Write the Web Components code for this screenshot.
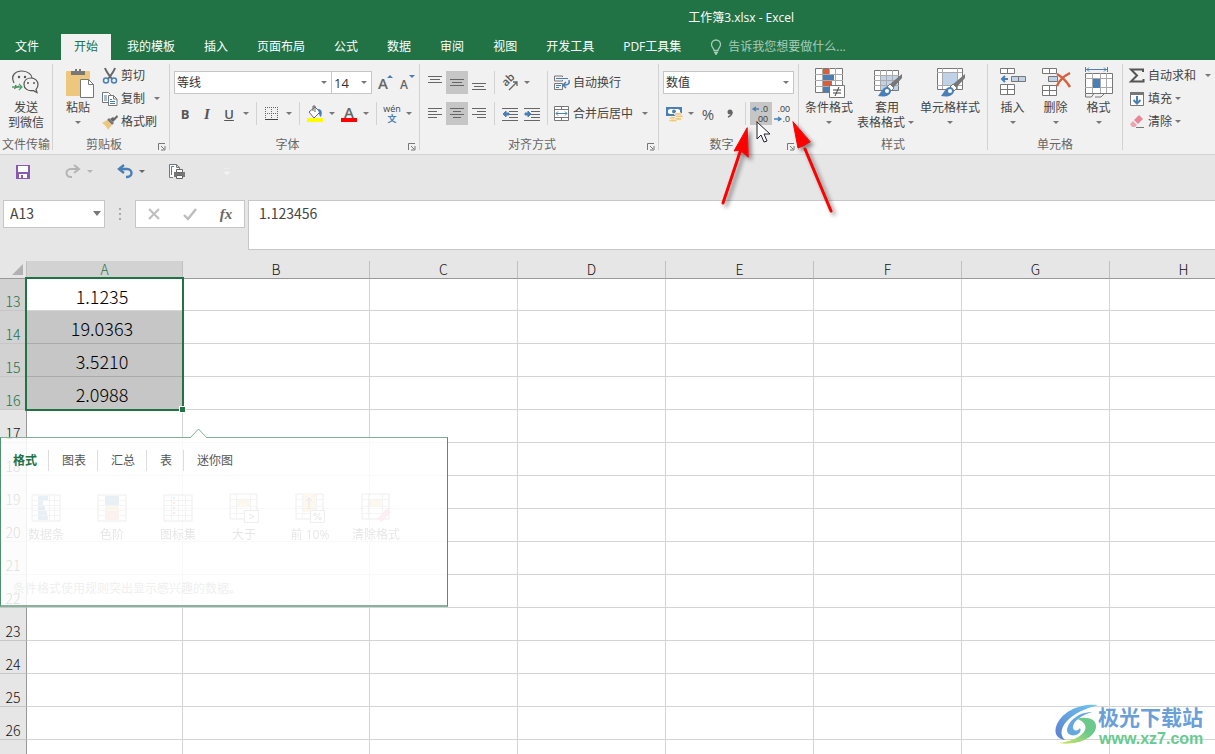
<!DOCTYPE html>
<html lang="zh-CN">
<head>
<meta charset="utf-8">
<meta name="viewport" content="width=device-width, initial-scale=1">
<title>工作簿3.xlsx - Excel</title>
<style>
html, body { margin: 0; height: 100%; }
body {
  --green: #217346; --ink: #444; --line: #d4d4d4; --blue: #4a7fb5;
  font: 12px/16px "Open Sans", "Noto Sans CJK SC", sans-serif;
  color: var(--ink); background: #e6e6e6; overflow: hidden;
}
</style>
</head>
<body>
<xl-window>
  <xl-title slot="top">工作簿3.xlsx - Excel</xl-title>
  <xl-tabs slot="top"></xl-tabs>
  <xl-ribbon slot="top">
    <xl-group caption="文件传输">
      <xl-big icon="wechat" size="52" line1="发送" line2="到微信"></xl-big>
    </xl-group>
    <xl-group caption="剪贴板" size="117" launcher>
      <xl-row class="flush">
        <xl-big icon="paste" size="44" line1="粘贴" menu></xl-big>
        <xl-stack>
          <xl-cmd icon="cut">剪切</xl-cmd>
          <xl-cmd icon="copy" menu="far">复制</xl-cmd>
          <xl-cmd icon="brush">格式刷</xl-cmd>
        </xl-stack>
      </xl-row>
    </xl-group>
    <xl-group caption="字体" size="250" launcher>
      <xl-stack class="spaced">
        <xl-row>
          <xl-combo label="字体" value="等线" size="158"></xl-combo>
          <xl-combo label="字号" value="14" size="40" joined></xl-combo>
          <xl-tool icon="grow" label="增大字号"></xl-tool>
          <xl-tool icon="shrink" label="减小字号"></xl-tool>
        </xl-row>
        <xl-row>
          <xl-tool label="加粗"><b>B</b></xl-tool>
          <xl-tool label="倾斜"><i>I</i></xl-tool>
          <xl-tool label="下划线" menu><u>U</u></xl-tool>
          <xl-sep></xl-sep>
          <xl-tool icon="borders" label="边框" menu></xl-tool>
          <xl-sep></xl-sep>
          <xl-tool icon="fill" label="填充颜色" menu></xl-tool>
          <xl-tool icon="fontcolor" label="字体颜色" menu></xl-tool>
          <xl-sep></xl-sep>
          <xl-tool icon="pinyin" label="拼音" menu></xl-tool>
        </xl-row>
      </xl-stack>
    </xl-group>
    <xl-group caption="对齐方式" size="239" launcher>
      <xl-row class="top">
        <xl-stack class="spaced">
          <xl-row><xl-tool icon="vtop" label="顶端对齐"></xl-tool><xl-tool icon="vmid" label="垂直居中" on></xl-tool><xl-tool icon="vbot" label="底端对齐"></xl-tool><xl-sep></xl-sep><xl-tool icon="orient" label="方向" menu></xl-tool></xl-row>
          <xl-row><xl-tool icon="left" label="左对齐"></xl-tool><xl-tool icon="center" label="居中" on></xl-tool><xl-tool icon="right" label="右对齐"></xl-tool><xl-sep></xl-sep><xl-tool icon="outdent" label="减少缩进量"></xl-tool><xl-tool icon="indent" label="增加缩进量"></xl-tool></xl-row>
        </xl-stack>
        <xl-sep class="tall"></xl-sep>
        <xl-stack class="spaced">
          <xl-cmd icon="wrap">自动换行</xl-cmd>
          <xl-cmd icon="merge" menu="far">合并后居中</xl-cmd>
        </xl-stack>
      </xl-row>
    </xl-group>
    <xl-group caption="数字" size="140" launcher>
      <xl-stack class="spaced">
        <xl-row><xl-combo label="数字格式" value="数值" size="131"></xl-combo></xl-row>
        <xl-row>
          <xl-tool icon="money" label="会计数字格式" menu></xl-tool>
          <xl-tool label="百分比样式"><span class="pct">%</span></xl-tool>
          <xl-tool icon="comma" label="千位分隔样式"></xl-tool>
          <xl-sep></xl-sep>
          <xl-tool icon="moredec" label="增加小数位数" on></xl-tool>
          <xl-tool icon="lessdec" label="减少小数位数"></xl-tool>
        </xl-row>
      </xl-stack>
    </xl-group>
    <xl-group caption="样式" size="189">
      <xl-row class="flush">
        <xl-big icon="cond" size="54" line1="条件格式" menu></xl-big>
        <xl-big icon="tablestyle" size="62" line1="套用" line2="表格格式" menu></xl-big>
        <xl-big icon="cellstyle" size="64" line1="单元格样式" menu></xl-big>
      </xl-row>
    </xl-group>
    <xl-group caption="单元格" size="135">
      <xl-row class="flush">
        <xl-big icon="insert" size="43" line1="插入" menu></xl-big>
        <xl-big icon="delete" size="43" line1="删除" menu></xl-big>
        <xl-big icon="format" size="43" line1="格式" menu></xl-big>
      </xl-row>
    </xl-group>
    <xl-group size="110">
      <xl-stack class="flush">
        <xl-cmd icon="sum" menu="far">自动求和</xl-cmd>
        <xl-cmd icon="down" menu="near">填充</xl-cmd>
        <xl-cmd icon="eraser" menu="near">清除</xl-cmd>
      </xl-stack>
    </xl-group>
  </xl-ribbon>
  <xl-quickbar slot="top"></xl-quickbar>
  <xl-formula slot="top" cell="A13" value="1.123456"></xl-formula>
  <xl-sheet>
    <xl-analysis></xl-analysis>
  </xl-sheet>
  <xl-mark slot="over"></xl-mark>
  <xl-pointers slot="over"></xl-pointers>
</xl-window>

<script>
const crisp = 'shape-rendering="crispEdges"';
const lines = (list) => `<g ${crisp} fill="#666">` + list.map(([x, y, w]) => `<rect x="${x}" y="${y}" width="${w}" height="1"/>`).join('') + '</g>';
const dentLines = lines([[0,2,16],[7,5,9],[7,8,9],[7,11,9],[0,14,16]]);
const paintBrush = `<path d="M31 8v4L22 22l-4-3z" fill="#777"/><path d="M19 18l4 4-3 3-4-4z" fill="#fff" stroke="#777"/><path d="M16 21c-4 0-5 4-9 9 5 1 12 1 13-5 0-2-2-4-4-4z" fill="#4a7fb5"/><circle cx="16" cy="25" r="2" fill="#fff"/>`;
const digits = (y, t) => `<text x="17" y="${y}" font-family="Liberation Sans" font-size="9" text-anchor="end" fill="#444">${t}</text>`;

/* name: [width, height, markup] */
const ICONS = {
  wechat: [32, 32, `<g fill="none" stroke="#555" stroke-width="1.2"><path d="M4 17C0 9 6 5 12 5s10 4 10 7M6 19l-1 3 4-2"/><path d="M21 12c4 0 7 3 7 6.500c0 2-1 4-2 5l1 3-4-2c-5 1-9-2-9-6s3-6.500 7-6.500z"/></g><g fill="#555"><circle cx="9" cy="11" r="1.200"/><circle cx="15" cy="11" r="1.200"/><circle cx="18" cy="17" r="1"/><circle cx="24" cy="17" r="1"/></g><path d="M2 21h10M9 18l3 3-3 3" fill="none" stroke="#4fa36c" stroke-width="1.300"/>`],
  paste: [32, 32, `<rect x="4" y="5" width="24" height="25" rx="1" fill="#eec77f"/><path d="M9 9V5h4V3h6v2h4v4z" fill="#777"/><rect x="15" y="3" width="2" height="2" fill="#eee"/><path d="M18.500 13.500h8l5 5v13h-13z" fill="#fff" stroke="#777"/><path d="M26.500 13.500v5h5" fill="none" stroke="#777"/>`],
  cut: [16, 16, `<path d="M3 0c1 3 3 6 7 11M13 0c-1 3-3 6-7 11" stroke="#666" stroke-width="2" fill="none"/><circle cx="4" cy="12.500" r="2.500" fill="none" stroke="#4a7fb5" stroke-width="1.500"/><circle cx="12" cy="12.500" r="2.500" fill="none" stroke="#4a7fb5" stroke-width="1.500"/>`],
  copy: [16, 16, `<path d="M.5 1.500h6l2 2v8h-8z" fill="#fff" stroke="#777"/><path d="M2 5h3M2 7h3M2 9h3" stroke="#4a7fb5"/><path d="M6.500 4.500h5l3.500 3.500v6.500H6.500z" fill="#fff" stroke="#777"/><path d="M11.500 4.500V8H15" fill="none" stroke="#777"/><path d="M8 8.500h2M8 10.500h5M8 12.500h5" stroke="#4a7fb5"/>`],
  brush: [16, 16, `<path d="M15 1l1 2-5 5-3-3 3-2 1 1z" fill="#666"/><path d="M7 4l5 5-2 2-5-5z" fill="#777"/><path d="M5 6l5 5-4 5c-1-3-3-5-6-7z" fill="#eec77f"/>`],
  grow: [20, 18, `<text x="2" y="15" font-size="15" font-weight="600" fill="#666">A</text><path d="M11 4l3-3 3 3z" fill="#4a7fb5"/>`],
  shrink: [20, 18, `<text x="2" y="15" font-size="12" font-weight="600" fill="#666">A</text><path d="M11 1l3 3 3-3z" fill="#4a7fb5"/>`],
  borders: [14, 14, `<path d="M.5 0v12M6.500 0v12M12.500 0v12M0 .5h13M0 6.500h13" stroke="#666" stroke-dasharray="1 1"/><rect y="12" width="13" height="1" fill="#444"/>`],
  fill: [18, 18, `<path d="M3 7l6-5 5 5-6 6z" fill="#fff" stroke="#666"/><path d="M7 6V1h2v6" fill="none" stroke="#666"/><path d="M12 4c3 0 5 2 3 8-2-1-2-4-3-8z" fill="#4a7fb5"/><rect x="1" y="13" width="16" height="4" fill="#ff0"/>`],
  fontcolor: [18, 18, `<text x="4" y="13" font-size="15" font-weight="600" fill="#666">A</text><rect x="1" y="13" width="16" height="4" fill="red"/>`],
  pinyin: [20, 20, `<text x="10" y="8" font-size="9" text-anchor="middle" fill="#444">wén</text><text x="10" y="18" font-size="9" font-weight="700" text-anchor="middle" fill="#4a7fb5">文</text>`],
  vtop: [16, 16, lines([[1,1,14],[3,4,10],[1,7,14]])],
  vmid: [16, 16, lines([[1,4,14],[3,7,10],[1,10,14]])],
  vbot: [16, 16, lines([[1,8,14],[3,11,10],[1,14,14]])],
  left: [16, 16, lines([[1,2,14],[1,5,9],[1,8,14],[1,11,9]])],
  center: [16, 16, lines([[1,2,14],[4,5,8],[1,8,14],[4,11,8]])],
  right: [16, 16, lines([[1,2,14],[6,5,9],[1,8,14],[6,11,9]])],
  outdent: [16, 16, dentLines + `<path d="M1 8l3-3v2h3v2H4v2z" fill="#4a7fb5" stroke="#4a7fb5"/>`],
  indent: [16, 16, dentLines + `<path d="M7 8L4 5v2H1v2h3v2z" fill="#4a7fb5" stroke="#4a7fb5"/>`],
  orient: [18, 18, `<text x="0" y="0" font-size="11" font-weight="600" fill="#555" transform="translate(5 13) rotate(-45)">ab</text><path d="M8 16l8-8M12 8h4v4" fill="none" stroke="#666" stroke-width="1.300"/>`],
  wrap: [16, 16, `<path d="M.5 1h8M.5 6h8M.5 1v5M.5 8.500h8v6h-8zM8.500 1v1M8.500 5v1" fill="none" stroke="#777"/><path d="M2 3.500h12M2 10.500h5M2 12.500h3" stroke="#4a7fb5"/><path d="M15 5c1 4-1 5-5 5M12 7l-3 3 3 3" fill="none" stroke="#4a7fb5" stroke-width="1.500"/>`],
  merge: [16, 16, `<path d="M.5.500h14v14H.5zM.5 3.500h14M.5 11.500h14M7.500.500v3M7.500 11.500v3" fill="#fff" stroke="#777"/><path d="M2 7.500h11M4 5.500l-2 2 2 2M11 5.500l2 2-2 2" fill="none" stroke="#4a7fb5"/>`],
  money: [18, 18, `<rect x="1" y="2" width="16" height="9" fill="#4a7fb5"/><path d="M3 5l2-1h8l2 1v3l-2 1H5L3 8z" fill="#fff"/><circle cx="9" cy="6.500" r="2" fill="#4a7fb5"/><g fill="#eec77f" stroke="#fff" stroke-width=".6"><ellipse cx="13" cy="9" rx="4" ry="1.500"/><ellipse cx="14" cy="11.500" rx="4" ry="1.500"/><ellipse cx="8" cy="13" rx="4" ry="1.500"/><ellipse cx="13" cy="14" rx="4" ry="1.500"/><ellipse cx="8" cy="15.500" rx="4" ry="1.500"/></g>`],
  comma: [14, 16, `<circle cx="7" cy="6" r="2.500" fill="#666"/><path d="M9 6c0 3-1 4-4 5" stroke="#666" stroke-width="1.500" fill="none"/>`],
  moredec: [20, 18, `${digits(7, '.0')}${digits(17, '.00')}<path d="M8 4H2M5 2L2 4l3 2" fill="none" stroke="#4a7fb5" stroke-width="1.300"/>`],
  lessdec: [20, 18, `${digits(7, '.00')}${digits(17, '.0')}<path d="M1 14h7M5 12l3 2-3 2" fill="none" stroke="#4a7fb5" stroke-width="1.300"/>`],
  cond: [32, 32, `<path d="M2.500 2.500h27v24h-27z" fill="#fff" stroke="#777"/><path d="M2 8.500h28M2 14.500h28M2 20.500h28M9.500 2v24M16.500 2v24M22.500 2v24" stroke="#aaa"/><g ${crisp}><path d="M10 3h6v5h-6zM10 15h9v5h-9z" fill="#d65f3c"/><path d="M10 9h11v5H10zM10 21h6v5h-6z" fill="#4a7fb5"/></g><path d="M16.500 19.500h15v12h-15z" fill="#fff" stroke="#777"/><path d="M20 24h8M20 27h8M26 21l-4 9" stroke="#444"/>`],
  tablestyle: [32, 32, `<path d="M3.500 4.500h24v20h-24z" fill="#fff" stroke="#777"/><path d="M10 10h17v14H10z" fill="#c0d2e8"/><path d="M3 9.500h25M3 14.500h25M3 19.500h25M9.500 4v20M15.500 4v20M21.500 4v20" stroke="#aaa"/>${paintBrush}`],
  cellstyle: [32, 32, `<path d="M3.500 2.500h25v21h-25z" fill="#fff" stroke="#777"/><path d="M3 6.500h25M3 19.500h25M8.500 2v21M23.500 2v21" stroke="#aaa"/><path d="M9 7h14v12H9z" fill="#c0d2e8"/>${paintBrush}`],
  insert: [32, 32, `<path d="M3.500 2.500h14v5h-14zM10.500 2.500v5M3.500 18.500h14v10h-14zM10.500 18.500v10M3.500 23.500h14" fill="#fff" stroke="#777"/><path d="M14.500 10.500h14v5h-14zM21.500 10.500v5" fill="#c0d2e8" stroke="#777"/><path d="M11 13H5M8 10l-3 3 3 3" fill="none" stroke="#4a7fb5" stroke-width="2"/>`],
  delete: [32, 32, `<path d="M2.500 2.500h14v5h-14zM9.500 2.500v5M2.500 19.500h14v10h-14zM9.500 19.500v10M2.500 24.500h14" fill="#fff" stroke="#777"/><path d="M8.500 10.500h9v5h-9z" fill="#c0d2e8" stroke="#777"/><path d="M17 8c5 3 10 8 13 13M30 7c-6 3-11 8-13 13" stroke="#d65f3c" stroke-width="2.500" fill="none"/>`],
  format: [32, 32, `<path d="M2.500 1v5M24.500 1v5M3 3.500h21M6 1.500l-2 2 2 2M21 1.500l2 2-2 2" stroke="#4a7fb5" fill="none"/><path d="M2.500 7.500h27v20h-27z" fill="#fff" stroke="#777"/><path d="M2 12.500h27M2 21.500h27M9.500 7v20M17.500 7v20M23.500 7v20" stroke="#aaa"/><path d="M10 13h7v9h-7z" fill="#4a7fb5"/><path d="M2.500 28v3h6l2-3M12 31h6l3-3" stroke="#777" fill="none"/>`],
  sum: [16, 16, `<path d="M14 4V1.500H2l6 6-6 6h12.500V11" fill="none" stroke="#555" stroke-width="2"/>`],
  down: [16, 16, `<path d="M1.500 1.500h13v13h-13z" fill="#fff" stroke="#777"/><path d="M1 1h14v3H1z" fill="#777"/><path d="M8 5v8M4.500 9L8 12.500 11.500 9" fill="none" stroke="#4a7fb5" stroke-width="2"/>`],
  eraser: [16, 16, `<path d="M10 1l4 4-5 5-4-4z" fill="#e8869a"/><path d="M4 7l4 4-2 2H3l-2-3z" fill="#e8a5b2"/><path d="M7 13.500h8" stroke="#777"/>`],
  launch: [8, 8, `<path d="M.5 7V.5H7M3 3l3 3M7 3v4H3" fill="none" stroke="#777"/>`],
  bulb: [12, 16, `<path d="M4 11.500C4 9 1.500 8.500 1.500 5.500a4.500 4.500 0 0 1 9 0C10.500 8.500 8 9 8 11.500zM4 13.500h4M5 15h2" fill="none" stroke="#a9cbb8" stroke-width="1.300"/>`],
  save: [16, 16, `<path d="M1 1h14v14H1z" fill="#8a5ab0"/><path d="M3 2h10v6H3zM4 10h8v4H4z" fill="#fff"/><path d="M6 11h2v3H6z" fill="#8a5ab0"/>`],
  redo: [18, 16, `<path d="M14 5H7c-6 0-6 8 0 8h1M10 1l5 4-5 4" fill="none" stroke="#b4b4b4" stroke-width="2"/>`],
  undo: [18, 16, `<path d="M4 5h7c6 0 6 8 0 8h-1M8 1L3 5l5 4" fill="none" stroke="#4a7fb5" stroke-width="2.400"/>`],
  print: [18, 18, `<path d="M5 14.500H1.500V1.500h7l3 3V6M8.500 1.500v3h3" fill="#fff" stroke="#777"/><path d="M3.500 12V3.500H6" stroke="#4a7fb5" fill="none"/><path d="M6 9h11v5H6z" fill="#777"/><path d="M8.500 6.500h6v3h-6zM8.500 12.500h6v3h-6z" fill="#fff" stroke="#666"/>`],
  custom: [8, 8, `<path d="M1 .5h6M1 4l3 3 3-3z" fill="#f3f3f3" stroke="#f3f3f3" stroke-width=".5"/>`],
  cancel: [14, 14, `<path d="M2 2l10 10M12 2L2 12" stroke="#bdbdbd" stroke-width="2"/>`],
  accept: [14, 14, `<path d="M1 8l4 4 8-10" fill="none" stroke="#bdbdbd" stroke-width="2.400"/>`],
  bars: [28, 28, `<path d="M0 1h28v26H0z" fill="#fff" stroke="#777"/><path d="M0 6.500h28M0 11.500h28M0 16.500h28M0 21.500h28M17.500 1v26M22.500 1v26" stroke="#aaa"/><path d="M6 2h10v4H6zM6 7h5v4H6zM6 12h7v4H6zM6 17h9v4H6zM6 22h10v4H6z" fill="#4a7fb5"/>`],
  scale: [28, 28, `<path d="M0 1h28v26H0z" fill="#fff" stroke="#777"/><path d="M0 6.500h28M0 11.500h28M0 16.500h28M0 21.500h28" stroke="#aaa"/><path d="M7 2h14v9H7z" fill="#4a7fb5"/><path d="M7 12h14v5H7z" fill="#eec77f"/><path d="M7 17h14v9H7z" fill="#e59a80"/>`],
  iconset: [28, 28, `<path d="M0 1h28v26H0z" fill="#fff" stroke="#777"/><path d="M0 6.500h28M0 11.500h28M0 16.500h28M0 21.500h28M7.500 1v26M14.500 1v26M21.500 1v26" stroke="#aaa"/><path d="M9 8h2v2H9zM9 18h2v2H9z" fill="#d65f3c"/><path d="M9 13h2v2H9zM9 3h2v2H9z" fill="#4a7fb5"/>`],
  greater: [30, 30, `<path d="M1 1h27v25H1z" fill="#fff" stroke="#777"/><path d="M1 6.500h27M1 13.500h27M1 20.500h27M7.500 1v25M21.500 1v25" stroke="#aaa"/><path d="M8 7h13v7H8z" fill="#eec77f"/><path d="M15.500 17.500h14v12h-14z" fill="#fff" stroke="#777"/><path d="M20 21l5 2.500-5 2.500" fill="none" stroke="#444"/>`],
  topten: [30, 30, `<path d="M1 1h27v25H1z" fill="#fff" stroke="#777"/><path d="M1 6.500h27M1 13.500h27M1 20.500h27M7.500 1v25M21.500 1v25" stroke="#aaa"/><path d="M8 1h13v18H8z" fill="#eec77f"/><path d="M14 16V5M11 8l3-3 3 3" fill="none" stroke="#444"/><path d="M15.500 17.500h14v12h-14z" fill="#fff" stroke="#777"/><path d="M20 27l5-7" stroke="#444"/><circle cx="20" cy="21.500" r="1.200" fill="none" stroke="#444"/><circle cx="25" cy="25.500" r="1.200" fill="none" stroke="#444"/>`],
  clearfmt: [30, 30, `<path d="M1 1h27v25H1z" fill="#fff" stroke="#777"/><path d="M1 6.500h27M1 13.500h27M1 20.500h27M7.500 1v25M21.500 1v25" stroke="#aaa"/><path d="M8 7h13v7H8z" fill="#eec77f"/><path d="M26 15l4 4-9 10-5-3z" fill="#e8869a"/>`]
};
const svg = (name) => {
  const [w, h, body] = ICONS[name];
  return `<svg class="icon" width="${w}" height="${h}" viewBox="0 0 ${w} ${h}" aria-hidden="true">${body}</svg>`;
};
const CARET = '<svg class="caret" width="12" height="6" viewBox="0 0 12 6" aria-hidden="true"><path d="M3 1h6L6 4z" fill="currentColor"/></svg>';
const BASE = `:host,*{box-sizing:border-box}svg{display:block;flex:none;overflow:visible}
button{font:inherit;color:inherit;background:none;border:0;margin:0;padding:0;text-align:center;white-space:nowrap}`;

function define(tag, css, render) {
  customElements.define(tag, class extends HTMLElement {
    constructor() { super(); this.attachShadow({ mode: 'open' }); }
    connectedCallback() {
      const size = this.getAttribute('size');
      if (size) this.style.setProperty('--size', size + 'px');
      this.shadowRoot.innerHTML = `<style>${BASE}${css}</style>${render(this)}`;
    }
  });
}
const attr = (el, name) => el.getAttribute(name) || '';

define('xl-window', `:host{display:flex;flex-direction:column;height:100vh;position:relative;overflow:hidden}`,
  () => `<slot name="top"></slot><slot></slot><slot name="over"></slot>`);

define('xl-title', `:host{display:block;flex:none;background:var(--green);color:#fff}
h1{margin:0;padding:10px 0 8px 22%;font:inherit;text-align:center}`,
  () => `<h1><slot></slot></h1>`);

define('xl-tabs', `:host{display:flex;flex:none;gap:3px;height:26px;padding-left:2px;background:var(--green);color:#fff}
button{padding:0 13px}
button:first-of-type{margin-right:6px}
button[aria-selected=true]{background:#f1f1f1;color:var(--green)}
label{display:flex;align-items:center;gap:6px;margin-left:13px}
input{width:140px;padding:0;border:0;background:none;font:inherit;color:#a9cbb8}
input::placeholder{color:#a9cbb8;opacity:1}`,
  () => ['文件', '开始', '我的模板', '插入', '页面布局', '公式', '数据', '审阅', '视图', '开发工具', 'PDF工具集']
    .map((t) => `<button role="tab" aria-selected="${t === '开始'}">${t}</button>`).join('') +
    `<label>${svg('bulb')}<input aria-label="搜索" placeholder="告诉我您想要做什么..."></label>`);

define('xl-ribbon', `:host{display:flex;flex:none;height:95px;background:#f1f1f1;border-bottom:1px solid #d2d2d2}`, () => `<slot></slot>`);

define('xl-group', `:host{display:flex;flex-direction:column;flex:none;width:var(--size,53px);padding-top:4px;background:linear-gradient(#d2d2d2,#d2d2d2) right center/1px 86px no-repeat}
:host(:last-child){background:none}
.body{height:72px}
.foot{display:flex;height:16px;color:#666;padding-right:1px}
.foot span{flex:1;padding-top:1px;text-align:center;white-space:nowrap}
.foot button{display:flex;width:14px;padding:7px 3px 0}`,
  (el) => `<div class="body"><slot></slot></div><div class="foot"><span>${attr(el, 'caption')}</span>${el.hasAttribute('launcher') ? `<button aria-label="${attr(el, 'caption')}设置">${svg('launch')}</button>` : ''}</div>`);

define('xl-row', `:host{display:flex;align-items:center}:host(.top){align-items:flex-start}:host(.flush){align-items:flex-start;padding-left:3px}`, () => `<slot></slot>`);
define('xl-stack', `:host{display:flex;flex-direction:column}:host(.spaced){gap:8px;padding:7px 0 0 4px}:host(.flush){padding-left:4px}`, () => `<slot></slot>`);
define('xl-sep', `:host{display:block;flex:none;width:1px;height:23px;margin:0 4px;background:#d2d2d2}:host(.tall){height:54px;margin:7px 0 0 4px}`, () => '');

define('xl-big', `:host{display:block;width:var(--size)}
button{display:flex;flex-direction:column;align-items:center;width:100%;padding-top:2px;line-height:15px}
.icon{margin-bottom:2px}
.second{display:flex;align-items:center;height:15px}.caret{color:#777}`,
  (el) => `<button>${svg(attr(el, 'icon'))}<span>${attr(el, 'line1')}</span><span class="second">${attr(el, 'line2')}${el.hasAttribute('menu') ? CARET : ''}</span></button>`);

define('xl-cmd', `:host{display:block}
button{display:flex;align-items:center;gap:3px;height:23px;padding:0 2px}
.caret{color:#777;margin-left:-3px}.far{margin-left:3px}`,
  (el) => `<button>${svg(attr(el, 'icon'))}<slot></slot>${attr(el, 'menu') ? CARET.replace('"caret"', `"caret ${attr(el, 'menu')}"`) : ''}</button>`);

define('xl-tool', `:host{display:flex;flex:none}
button{display:flex;align-items:center;justify-content:center;width:22px;height:23px;font-size:13px;color:#555}
button.menu{width:12px;color:#777}
:host([on]) button{background:#c6c6c6}
::slotted(i){font-family:"Liberation Serif",serif;font-weight:700;font-size:15px}
::slotted(u){font-weight:600}
::slotted(.pct){font-size:15px}`,
  (el) => `<button aria-label="${attr(el, 'label')}">${attr(el, 'icon') ? svg(attr(el, 'icon')) : '<slot></slot>'}</button>${el.hasAttribute('menu') ? `<button class="menu" aria-label="${attr(el, 'label')}选项">${CARET}</button>` : ''}`);

define('xl-combo', `:host{display:grid;flex:none;width:var(--size);height:23px}
:host([joined]){margin:0 3px 0 -1px;width:41px}
select,svg{grid-area:1/1}
select{appearance:none;width:100%;height:100%;padding:0 2px;border:1px solid #c6c6c6;border-radius:0;background:#fff;font:inherit;color:#333}
:host([joined]) select{font-size:13px}
.caret{justify-self:end;align-self:center;margin-right:2px;color:#777;pointer-events:none}`,
  (el) => `<select aria-label="${attr(el, 'label')}"><option>${attr(el, 'value')}</option></select>${CARET}`);

define('xl-quickbar', `:host{display:flex;flex:none;align-items:center;height:35px;padding:0 0 2px 12px}
button{display:flex;align-items:center;justify-content:center;width:22px;height:22px}
.menu{width:12px;color:#666}.off{color:#b4b4b4}
.a{margin-left:28px}.b{margin-left:18px}.c{margin-left:33px}`,
  () => `<button aria-label="保存">${svg('save')}</button>
<button class="a" aria-label="恢复">${svg('redo')}</button><button class="menu off" aria-label="恢复选项">${CARET}</button>
<button class="b" aria-label="撤消">${svg('undo')}</button><button class="menu" aria-label="撤消选项">${CARET}</button>
<button class="b" aria-label="打印预览">${svg('print')}</button><button class="c menu" aria-label="自定义快速访问工具栏">${svg('custom')}</button>`);

define('xl-formula', `:host{display:flex;flex:none;align-items:flex-start;padding:10px 0 11px 3px;font:14px/20px "Noto Sans CJK SC",sans-serif}
.name{display:grid;width:102px;height:28px}
.name>*{grid-area:1/1}
input,textarea{font:inherit;color:#444;border:1px solid #c6c6c6;border-radius:0;background:#fff;margin:0}
.name input{width:100%;padding:0 6px 2px}
.name svg{justify-self:end;align-self:center;margin-right:2px;color:#777}
.name path{d:path("M2 0h8L6 5z")}
.dots{width:2px;height:12px;margin:8px 14px;background:repeating-linear-gradient(#aaa 0 2px,transparent 2px 5px)}
.keys{display:flex;width:110px;height:28px;border:1px solid #c6c6c6;background:#fff}
.keys button{display:flex;flex:1;align-items:center;justify-content:center}
.fx{font:italic bold 15px "Liberation Serif",serif;color:#666}
textarea{flex:1;height:50px;margin-left:3px;padding:2px 10px;border-right:0;resize:none;overflow:hidden}`,
  (el) => `<div class="name"><input aria-label="名称框" value="${attr(el, 'cell')}">${CARET}</div><div class="dots"></div>
<div class="keys"><button aria-label="取消">${svg('cancel')}</button><button aria-label="输入">${svg('accept')}</button><button class="fx" aria-label="插入函数">fx</button></div>
<textarea aria-label="编辑栏">${attr(el, 'value')}</textarea>`);

const VALUES = { 13: '1.1235', 14: '19.0363', 15: '3.5210', 16: '2.0988' };
define('xl-sheet', `:host{display:block;flex:1;min-height:0;position:relative;overflow:hidden;background:#fff;font-family:"Noto Sans CJK SC",sans-serif}
table{table-layout:fixed;width:1258px;border-collapse:separate;border-spacing:0}
col.n{width:27px}col.a{width:156px}col.b{width:187px}
th,td{padding:0;border:0 solid var(--line);border-width:0 1px 1px 0;font-weight:300}
th{background:#e6e6e6;color:#111;font-size:14px;line-height:17px}
thead th{height:18px;border-color:#c0c0c0;border-bottom-color:#999}
tbody th{height:33px;vertical-align:bottom;border-color:#c6c6c6;border-right-color:#999}
tbody tr:first-child th{height:32px}
th.on{background:#d2d2d2;color:var(--green)}
td{font-size:18px;line-height:24px;text-align:center;color:#000;padding:2px 5px 0 0}
td.sel{background:#c6c6c6;border-color:#aaa}
.corner svg{margin-left:12px}
.range{position:absolute;left:25px;top:16px;width:159px;height:134px;border:2px solid var(--green);pointer-events:none}
.range::after{content:"";position:absolute;right:-3px;bottom:-3px;width:5px;height:5px;background:var(--green);outline:1px solid #fff}`,
  () => {
    const cols = 'ABCDEFGH'.split('');
    const rows = Array.from({ length: 15 }, (_, i) => 13 + i).map((n) =>
      `<tr><th scope="row"${n < 17 ? ' class="on"' : ''}>${n}</th>` + cols.map((c) =>
        `<td${c === 'A' && n > 13 && n < 17 ? ' class="sel"' : ''}>${c === 'A' && VALUES[n] || ''}</td>`).join('') + '</tr>').join('');
    return `<table><colgroup><col class="n"><col class="a"><col class="b">${'<col>'.repeat(6)}</colgroup>
<thead><tr><th class="corner"><svg width="11" height="11" viewBox="0 0 11 11"><path d="M11 0v11H0z" fill="#b1b1b1"/></svg></th>${cols.map((c) => `<th scope="col"${c === 'A' ? ' class="on"' : ''}>${c}</th>`).join('')}</tr></thead>
<tbody>${rows}</tbody></table><div class="range"></div><slot></slot>`;
  });

define('xl-analysis', `:host{position:absolute;left:0;top:176px;width:448px;height:170px;border:1px solid #4f9270;border-top-color:#7fb096;border-bottom:2px solid #86b49b;background:rgba(255,255,255,.86);font:12px/16px "Open Sans","Noto Sans CJK SC",sans-serif}
.tip{position:absolute;left:188px;top:-10px}
nav{display:flex;padding:12px 0 0 1px}
nav button{height:21px;padding:0 11px 0 13px;border-right:1px solid #ddd;color:#555}
nav button:first-child{padding-left:11px;color:var(--green);font-weight:700}
nav button:last-child{border:0}
.items{display:flex;padding:22px 0 0 12px;opacity:.12}
.items button{display:flex;flex-direction:column;align-items:center;gap:4px;width:66px;color:#333}
.items svg{height:30px}
p{margin:38px 0 0 12px;color:#efefef}`,
  () => `<svg class="tip" width="20" height="11" viewBox="0 0 20 11"><path d="M1 10L9.500 1 18 10v1H1z" fill="#fff"/><path d="M1 10L9.500 1 18 10" fill="none" stroke="#7fb096"/></svg>
<nav>${['格式', '图表', '汇总', '表', '迷你图'].map((t) => `<button>${t}</button>`).join('')}</nav>
<div class="items">${[['bars', '数据条'], ['scale', '色阶'], ['iconset', '图标集'], ['greater', '大于'], ['topten', '前 10%'], ['clearfmt', '清除格式']].map(([i, t]) => `<button>${svg(i)}<span>${t}</span></button>`).join('')}</div>
<p>条件格式使用规则突出显示感兴趣的数据。</p>`);

define('xl-mark', `:host{position:absolute;right:11px;bottom:6px;display:flex;align-items:center}
.words{display:flex;flex-direction:column;width:106px}
b{font:700 21px/28px "Noto Sans CJK SC",sans-serif;color:#6a9fd8;white-space:nowrap}
a{padding-left:1px;font:700 16px/18px "Liberation Sans",sans-serif;color:#67cb8f;text-decoration:none;white-space:nowrap}`,
  () => `<svg width="43" height="42" viewBox="0 0 43 42"><defs><linearGradient id="g" x1="0" y1="1" x2="1" y2="0"><stop offset="0" stop-color="#5b7fd0"/><stop offset="1" stop-color="#6cc8f0"/></linearGradient><linearGradient id="h" x1="0" y1="1" x2="1" y2="0"><stop offset="0" stop-color="#d8e860"/><stop offset=".6" stop-color="#6cc98c"/><stop offset="1" stop-color="#6cc98c"/></linearGradient></defs>
<path d="M43 1C26-1 8 7 2 20c-4 9 0 15 8 16C4 31 6 22 14 15 22 8 32 4 43 1z" fill="url(#g)"/><path d="M37 8C24 8 13 17 12 26c0 5 6 7 11 4 3-2 3-4 2-6-3 4-7 3-7-1 0-6 9-12 19-15z" fill="#65a8e0"/><path d="M22 15c8-3 20-1 19 8C40 34 22 42 3 39c12-1 24-6 27-13 2-5-2-9-8-11z" fill="url(#h)"/></svg>
<div class="words"><b>极光下载站</b><a href="#">www.xz7.com</a></div>`);

define('xl-pointers', `:host{position:absolute;left:700px;top:110px;pointer-events:none}
.arrows{filter:drop-shadow(3px 3px 2px rgba(0,0,0,.45))}`,
  () => `<svg width="150" height="110" viewBox="0 0 150 110" aria-hidden="true">
<path d="M57 12v17l4-4 3 7 3-1-3-7h6z" fill="#fff" stroke="#223" stroke-linejoin="round"/>
<g class="arrows" fill="red" stroke="red" stroke-linecap="round"><path d="M23 93l18-54M131 101L105 39" stroke-width="3" fill="none"/><path d="M47 18L34 41l6-1 8 7zM93 12l5 26 5-2 7-4z" stroke-width="1"/></g></svg>`);
</script>
</body>
</html>
